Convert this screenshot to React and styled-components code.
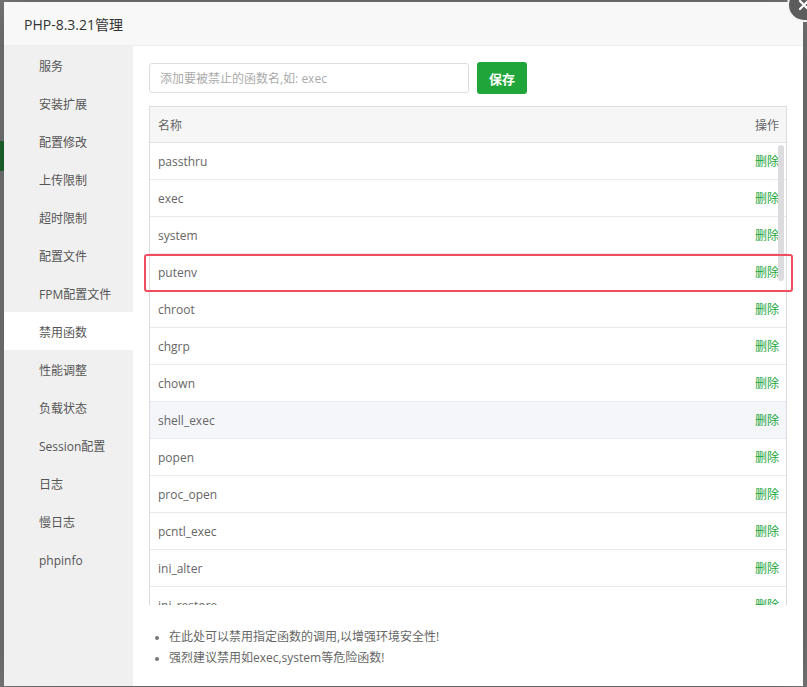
import React from 'react';
import styled, { createGlobalStyle, css } from 'styled-components';

const GlobalStyle = createGlobalStyle`
  html, body {
    margin: 0;
    padding: 0;
  }
  body {
    width: 807px;
    height: 687px;
    overflow: hidden;
    background:
      linear-gradient(to bottom, transparent 141px, #1d6b31 141px, #1d6b31 171px, transparent 171px) 0 0 / 4px 100% no-repeat,
      #787878;
    font-family: "Open Sans", "Noto Sans CJK SC", sans-serif;
  }
`;

const Page = styled.div`
  padding: 2px 4px 1px 4px;
`;

const Modal = styled.div`
  position: relative;
  width: 799px;
  height: 684px;
  background: #fff;
  display: flex;
  flex-direction: column;
  box-shadow: 1px 1px 50px rgba(0, 0, 0, 0.3);
`;

const Header = styled.div`
  height: 43px;
  line-height: 45px;
  padding: 0 20px;
  background: #f8f8f8;
  border-bottom: 1px solid #eee;
  color: #333;
  font-size: 14px;
  flex-shrink: 0;
`;

const CloseBtn = styled.span`
  position: absolute;
  top: -14px;
  right: -18px;
  width: 30px;
  height: 30px;
  border-radius: 50%;
  background: #5c5c5c;
  border: 2px solid #f3f3f3;
  display: flex;
  align-items: center;
  justify-content: center;
`;

const Body = styled.div`
  flex: 1;
  display: flex;
  min-height: 0;
`;

const Sidebar = styled.div`
  width: 129px;
  background: #f0f0f0;
  flex-shrink: 0;
`;

const NavItem = styled.div`
  height: 34px;
  line-height: 34px;
  padding: 4px 0 0 35px;
  font-size: 12px;
  color: #555;
  ${p => p.$active && css`
    background: #fff;
  `}
`;

const Content = styled.div`
  flex: 1;
  padding: 16px 16px 0 16px;
  display: flex;
  flex-direction: column;
`;

const InputRow = styled.div`
  display: flex;
  align-items: center;
  gap: 8px;
`;

const Input = styled.input`
  width: 320px;
  height: 30px;
  box-sizing: border-box;
  border: 1px solid #ddd;
  border-radius: 3px;
  padding: 0 10px;
  font-size: 12px;
  font-family: inherit;
  color: #333;
  outline: none;
  &::placeholder {
    color: #aaa;
  }
`;

const SaveButton = styled.button`
  width: 50px;
  height: 32px;
  border: none;
  border-radius: 3px;
  background: #20a53a;
  color: #fff;
  font-size: 13px;
  font-weight: 600;
  font-family: inherit;
  padding: 0;
`;

const TableWrap = styled.div`
  position: relative;
  margin-top: 12px;
  border: 1px solid #ddd;
  border-bottom: none;
`;

const Row = styled.div`
  display: flex;
  justify-content: space-between;
  align-items: center;
  height: ${p => (p.$head ? '35px' : '36px')};
  padding: 0 7px 0 8px;
  border-bottom: 1px solid #e8e8ee;
  font-size: 12px;
  color: #666;
  background: ${p => (p.$head ? '#f6f6f6' : p.$hover ? '#f4f6fa' : '#fff')};
  ${p => p.$head && css`
    border-bottom-color: #e2e2e2;
  `}
`;

const DeleteLink = styled.span`
  color: #20a53a;
`;

const ScrollBody = styled.div`
  position: relative;
  height: 462px;
  overflow: hidden;
`;

const ScrollThumb = styled.div`
  position: absolute;
  top: 2px;
  right: 2px;
  width: 6px;
  height: 136px;
  border-radius: 3px;
  background: #dcdcdf;
`;

const Highlight = styled.div`
  position: absolute;
  left: -6px;
  top: 147px;
  width: 645px;
  height: 34px;
  border: 2px solid #f24c61;
  border-radius: 3px;
  pointer-events: none;
`;

const Notes = styled.ul`
  margin: 21px 0 0 0;
  padding: 0 0 0 20px;
  font-size: 12px;
  line-height: 21px;
  color: #666;
  li::marker {
    color: #777;
    font-size: 10px;
  }
`;

const navItems = [
  '服务', '安装扩展', '配置修改', '上传限制', '超时限制', '配置文件', 'FPM配置文件',
  '禁用函数', '性能调整', '负载状态', 'Session配置', '日志', '慢日志', 'phpinfo',
];

const functions = [
  'passthru', 'exec', 'system', 'putenv', 'chroot', 'chgrp', 'chown', 'shell_exec',
  'popen', 'proc_open', 'pcntl_exec', 'ini_alter', 'ini_restore', 'dl', 'openlog',
  'syslog', 'readlink', 'symlink', 'popepassthru', 'pcntl_alarm', 'pcntl_fork',
];

const App = () => {
  return (
    <Page>
      <GlobalStyle />
      <Modal>
        <Header>PHP-8.3.21管理</Header>
        <CloseBtn>
          <svg width="12" height="12" viewBox="0 0 12 12">
            <path d="M2 2 L10 10 M10 2 L2 10" stroke="#fff" strokeWidth="2.2" strokeLinecap="round" />
          </svg>
        </CloseBtn>
        <Body>
          <Sidebar>
            {navItems.map(item => (
              <NavItem key={item} $active={item === '禁用函数'}>{item}</NavItem>
            ))}
          </Sidebar>
          <Content>
            <InputRow>
              <Input placeholder="添加要被禁止的函数名,如: exec" />
              <SaveButton>保存</SaveButton>
            </InputRow>
            <TableWrap>
              <Row $head>
                <span>名称</span>
                <span>操作</span>
              </Row>
              <ScrollBody>
                {functions.map(fn => (
                  <Row key={fn} $hover={fn === 'shell_exec'}>
                    <span>{fn}</span>
                    <DeleteLink>删除</DeleteLink>
                  </Row>
                ))}
                <ScrollThumb />
              </ScrollBody>
              <Highlight />
            </TableWrap>
            <Notes>
              <li>在此处可以禁用指定函数的调用,以增强环境安全性!</li>
              <li>强烈建议禁用如exec,system等危险函数!</li>
            </Notes>
          </Content>
        </Body>
      </Modal>
    </Page>
  );
};

export default App;
